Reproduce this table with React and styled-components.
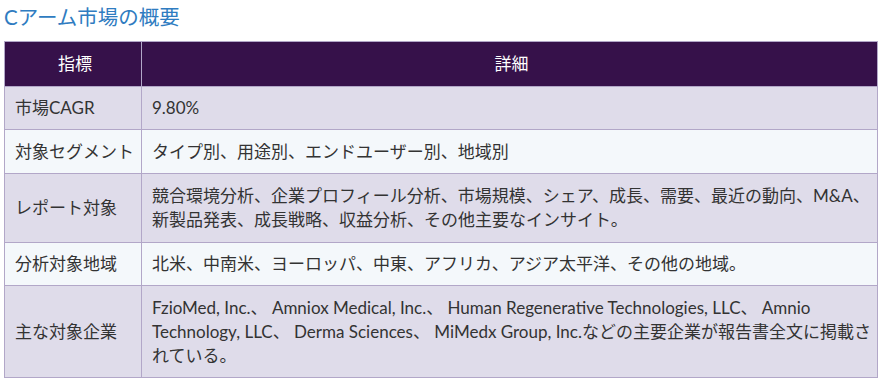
import React from "react";
import styled, { createGlobalStyle } from "styled-components";

const Global = createGlobalStyle`
  html, body { margin: 0; padding: 0; background: #ffffff; }
  body { font-family: "Lato", "Noto Sans CJK JP", sans-serif; color: #333333; }
`;

const Page = styled.div`
  padding: 0 7px 0 4px;
`;

const Title = styled.h2`
  margin: 0;
  height: 41px;
  font-size: 20.5px;
  line-height: 34px;
  font-weight: 400;
  color: #2f7cc1;
  font-family: "Lato", "Noto Sans CJK JP", sans-serif;
`;

const Table = styled.table`
  width: 874px;
  table-layout: fixed;
  border-collapse: collapse;
  font-size: 17px;
  line-height: 24px;
`;

const HeadCell = styled.th`
  background: #36114a;
  color: #ffffff;
  font-weight: 400;
  height: 44px;
  padding: 0 6px 0 10px;
  text-align: center;
  border: 1px solid #b2a7c8;
  width: ${(p) => p.$w || "auto"};
`;

const Row = styled.tr`
  background: ${(p) => (p.$alt ? "#f4f8fb" : "#dfdcea")};
`;

const Cell = styled.td`
  border: 1px solid #b2a7c8;
  padding: 9px 6px 9px 10px;
  vertical-align: middle;
  color: #333333;
  height: ${(p) => p.$h || "auto"};
  box-sizing: border-box;
`;

const rows = [
  ["市場CAGR", "9.80%", "42px"],
  ["対象セグメント", "タイプ別、用途別、エンドユーザー別、地域別", "44px"],
  [
    "レポート対象",
    "競合環境分析、企業プロフィール分析、市場規模、シェア、成長、需要、最近の動向、M&A、新製品発表、成長戦略、収益分析、その他主要なインサイト。",
    "69px",
  ],
  ["分析対象地域", "北米、中南米、ヨーロッパ、中東、アフリカ、アジア太平洋、その他の地域。", "43px"],
  [
    "主な対象企業",
    "FzioMed, Inc.、 Amniox Medical, Inc.、 Human Regenerative Technologies, LLC、 Amnio Technology, LLC、 Derma Sciences、 MiMedx Group, Inc.などの主要企業が報告書全文に掲載されている。",
    "92px",
  ],
];

export default function App() {
  return (
    <Page>
      <Global />
      <Title>Cアーム市場の概要</Title>
      <Table>
        <thead>
          <tr>
            <HeadCell $w="120px">指標</HeadCell>
            <HeadCell>詳細</HeadCell>
          </tr>
        </thead>
        <tbody>
          {rows.map(([k, v, h], i) => (
            <Row key={k} $alt={i % 2 === 1}>
              <Cell $h={h}>{k}</Cell>
              <Cell $h={h}>{v}</Cell>
            </Row>
          ))}
        </tbody>
      </Table>
    </Page>
  );
}
